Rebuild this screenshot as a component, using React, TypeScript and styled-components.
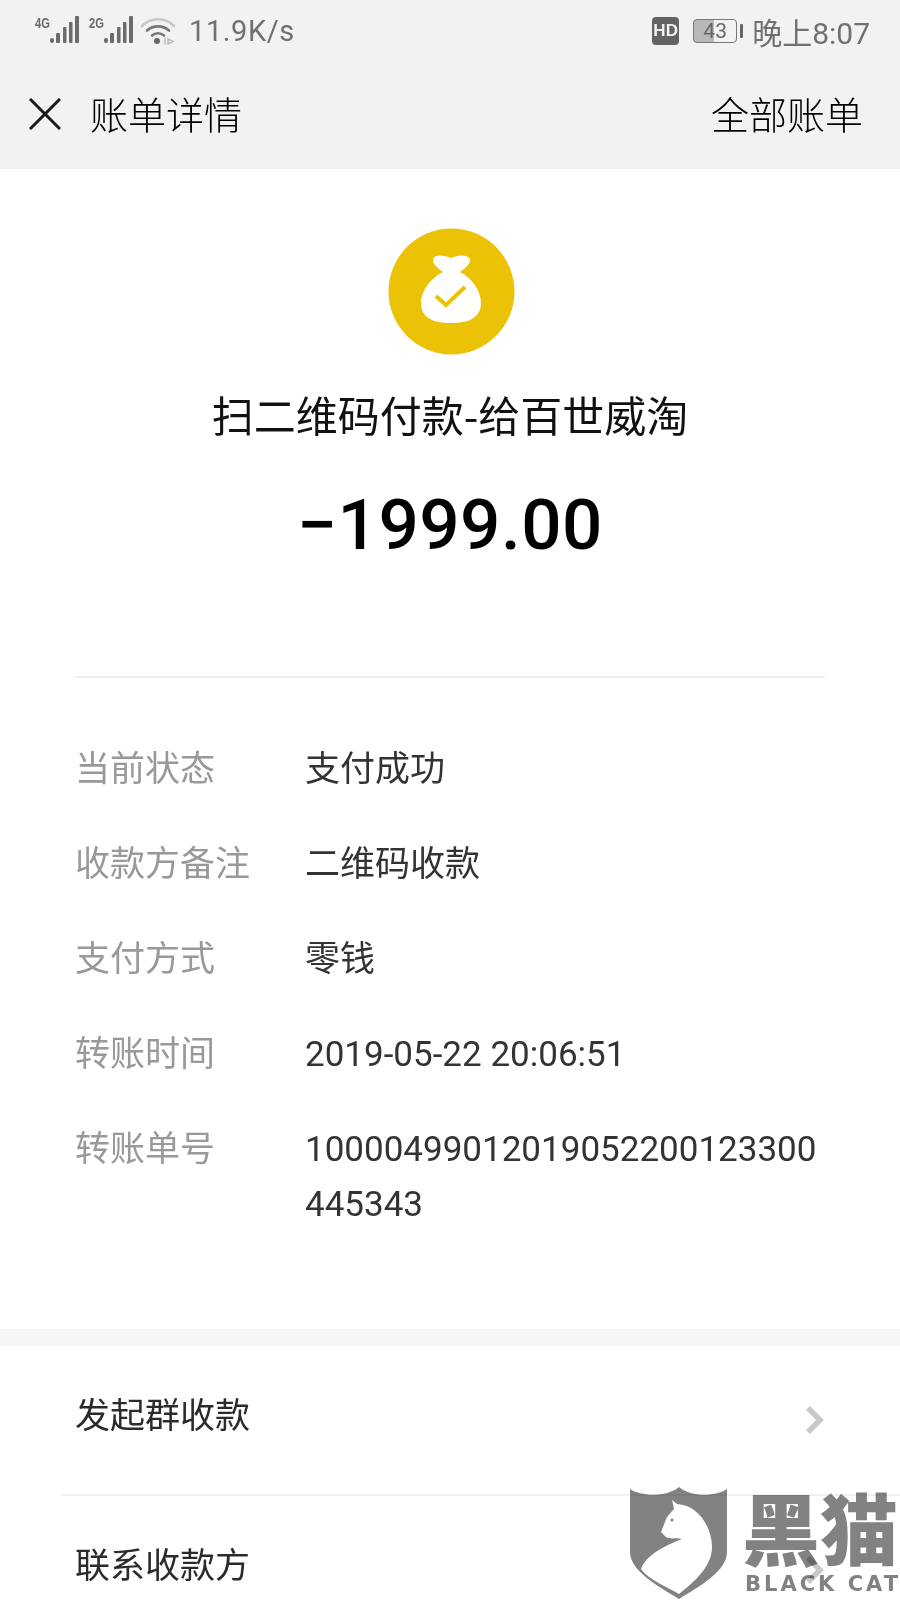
import React from 'react';
import styled, { createGlobalStyle } from 'styled-components';

const Global = createGlobalStyle`
  html, body { margin: 0; padding: 0; background: #fff; }
  body { font-family: Roboto, "Noto Sans CJK SC", sans-serif; }
`;

const Page = styled.div`
  position: relative;
  width: 900px;
  height: 1600px;
  overflow: hidden;
  background: #fff;
`;

const Top = styled.div`
  background: #f2f2f2;
  height: 169px;
  display: flex;
  flex-direction: column;
`;

const StatusBar = styled.div`
  height: 62px;
  padding: 0 30px 0 35px;
  display: flex;
  align-items: center;
  justify-content: space-between;
  color: #707070;
`;

const StatusGroup = styled.div`
  display: flex;
  align-items: center;
`;

const SignalGlyph = styled.svg`
  margin-bottom: 2px;
`;

const WifiGlyph = styled.svg`
  margin-left: -3px;
`;

const Speed = styled.span`
  font-size: 29px;
  letter-spacing: 0.6px;
  margin-left: 13px;
`;

const Clock = styled.span`
  font-family: Roboto, "Noto Sans CJK SC", sans-serif;
  font-size: 30px;
  margin-left: 9px;
`;

const HdBadge = styled.span`
  width: 27px;
  height: 28px;
  border-radius: 4px;
  background: #636363;
  color: #f2f2f2;
  font: 700 17px "Liberation Sans", sans-serif;
  display: flex;
  align-items: center;
  justify-content: center;
  margin-right: 14px;
`;

const Battery = styled.span`
  position: relative;
  width: 44px;
  height: 24px;
  box-sizing: border-box;
  border: 1.5px solid #777;
  border-radius: 4px;
  font-size: 21px;
  display: flex;
  align-items: center;
  justify-content: center;
  color: #666;
  background: linear-gradient(90deg, #b8b8b8 0 48%, transparent 48%);
`;

const BatteryCap = styled.span`
  width: 3px;
  height: 14px;
  margin-left: 3px;
  background: #666;
  border-radius: 1px;
`;

const NavBar = styled.div`
  flex: 1;
  display: flex;
  align-items: center;
  justify-content: space-between;
  padding: 0 37px 7px 29px;
  font-family: "Noto Sans CJK SC", sans-serif;
  font-size: 38px;
  font-weight: 300;
  color: #000;
`;

const NavLeft = styled.div`
  display: flex;
  align-items: center;
  gap: 29px;
`;

const CloseGlyph = styled.svg`
  margin-top: 4px;
`;

const Summary = styled.div`
  display: flex;
  flex-direction: column;
  align-items: center;
  padding: 59px 0 0 2px;
`;

const Title = styled.div`
  margin: 28px 2px 0 0;
  font-family: "Noto Sans CJK SC", sans-serif;
  font-size: 42px;
  line-height: 62px;
  font-weight: 400;
  color: #111;
`;

const Amount = styled.div`
  margin: 36px 2px 0 0;
  font-family: Roboto, sans-serif;
  font-size: 71px;
  line-height: 88px;
  font-weight: 500;
  color: #000;
  letter-spacing: 0.5px;
`;

const Divider = styled.div`
  height: 2px;
  background: #eeeeee;
  margin: 107px 75px 0;
`;

const Details = styled.div`
  padding: 60px 75px 0;
  display: flex;
  flex-direction: column;
  gap: 40px;
`;

const Row = styled.div`
  display: flex;
  font-size: 35px;
  line-height: 55px;
`;

const Label = styled.div`
  width: 230px;
  flex-shrink: 0;
  font-family: "Noto Sans CJK SC", sans-serif;
  font-weight: 400;
  color: #999;
`;

const Value = styled.div<{ $latin?: boolean }>`
  flex: 1;
  font-family: ${p => (p.$latin ? 'Roboto, ' : '')}"Noto Sans CJK SC", sans-serif;
  font-weight: 400;
  color: #333;
  word-break: break-all;
  padding-top: ${p => (p.$latin ? '4px' : '0')};
  margin-bottom: ${p => (p.$latin ? '-4px' : '0')};
`;

const Gap = styled.div`
  height: 17px;
  margin-top: 101px;
  background: #f6f6f6;
`;

const ActionRow = styled.div`
  height: 148px;
  margin-left: 62px;
  padding: 0 76px 0 13px;
  display: flex;
  align-items: center;
  justify-content: space-between;
  font-family: "Noto Sans CJK SC", sans-serif;
  font-size: 35px;
  font-weight: 400;
  color: #2b2b2b;
`;

const ActionText = styled.span`
  margin-bottom: 16px;
`;

const ActionLine = styled.div`
  height: 2px;
  background: #f0f0f0;
  margin-left: 62px;
`;

const Watermark = styled.div`
  position: absolute;
  left: 630px;
  top: 1487px;
  display: flex;
  gap: 15px;
  color: #828282;
  mix-blend-mode: multiply;
`;

const MarkText = styled.div`
  display: flex;
  flex-direction: column;
  padding-top: 2px;
`;

const MarkCn = styled.div`
  font-family: "Noto Sans CJK SC", sans-serif;
  font-size: 78px;
  line-height: 74px;
  font-weight: 900;
`;

const MarkEn = styled.div`
  margin: 6px 0 0 3px;
  font-family: "DejaVu Sans", sans-serif;
  font-size: 21px;
  font-weight: 700;
  line-height: 30px;
  letter-spacing: 3px;
  white-space: nowrap;
`;

const Signal = ({ tag }: { tag: string }) => (
  <SignalGlyph width="54" height="28" viewBox="0 0 54 28">
    <text x="0" y="12" fontFamily="Liberation Sans, sans-serif" fontSize="14" fontWeight="700" fill="#6b6b6b" textLength="15" lengthAdjust="spacingAndGlyphs">{tag}</text>
    <g fill="#6b6b6b">
      <rect x="15" y="22" width="4" height="5" rx="2" />
      <rect x="21" y="17" width="4" height="10" rx="1" />
      <rect x="28" y="11" width="3.5" height="16" rx="1" />
      <rect x="34" y="6" width="3.5" height="21" rx="1" />
      <rect x="40" y="0" width="4" height="27" rx="1" />
    </g>
  </SignalGlyph>
);

const Wifi = () => (
  <WifiGlyph width="36" height="30" viewBox="0 0 36 30" fill="none" strokeLinecap="round">
    <path d="M2 10 C11 1 25 1 34 10" stroke="#c8c8c8" strokeWidth="2.6" />
    <path d="M7 14.5 C13 9 23 9 29 14.5" stroke="#777" strokeWidth="2.6" />
    <path d="M12 19.5 C15.5 16.5 20.5 16.5 24 19.5" stroke="#777" strokeWidth="2.6" />
    <circle cx="17" cy="25" r="3" fill="#666" />
    <path d="M25 22 L25 28 M28 23 L33 25.5 L28 28 Z" stroke="#bbb" strokeWidth="1.5" />
  </WifiGlyph>
);

const CloseIcon = () => (
  <CloseGlyph width="32" height="32" viewBox="0 0 32 32" stroke="#1a1a1a" strokeWidth="3">
    <path d="M1 1 L31 31 M31 1 L1 31" />
  </CloseGlyph>
);

const BagIcon = () => (
  <svg width="127" height="127" viewBox="0 0 127 127">
    <circle cx="63.5" cy="63.5" r="63" fill="#ecc207" />
    <path
      d="M45 31 C47 26 56 27 63 30 C70 27 79 26 82 31 C83 36 76 41 72 44 C84 50 93 63 93 75 C93 90 80 95 63 95 C46 95 33 90 33 75 C33 63 43 50 55 44 C51 41 44 36 45 31 Z"
      fill="#fff"
    />
    <path d="M48 68 L58 77 L77 59" fill="none" stroke="#ecc207" strokeWidth="4" />
  </svg>
);

const Chevron = () => (
  <svg width="18" height="28" viewBox="0 0 18 28" fill="none" stroke="#c8c8c8" strokeWidth="5.5">
    <path d="M2 2 L14 14 L2 26" />
  </svg>
);

const Shield = () => (
  <svg width="97" height="112" viewBox="0 0 97 112">
    <path
      d="M0 2 C10 9 36 11 49 0 C62 11 87 9 97 2 L97 65 C97 84 70 99 49 112 C28 99 0 84 0 65 Z"
      fill="#828282"
    />
    <path
      d="M42 13 L47 17 C68 18 82 40 82 60 C82 80 64 95 49 107 C37 100 18 92 11 82 C15 72 24 63 52 52 C46 50 41 53 36 50 L31 45 L37 30 L44 22 Z"
      fill="#fff"
    />
    <circle cx="42" cy="33" r="1.5" fill="#828282" />
  </svg>
);

export default function App() {
  return (
    <Page>
      <Global />
      <Top>
        <StatusBar>
          <StatusGroup>
            <Signal tag="4G" />
            <Signal tag="2G" />
            <Wifi />
            <Speed>11.9K/s</Speed>
          </StatusGroup>
          <StatusGroup>
            <HdBadge>HD</HdBadge>
            <Battery>43</Battery>
            <BatteryCap />
            <Clock>晚上8:07</Clock>
          </StatusGroup>
        </StatusBar>
        <NavBar>
          <NavLeft>
            <CloseIcon />
            <span>账单详情</span>
          </NavLeft>
          <span>全部账单</span>
        </NavBar>
      </Top>

      <Summary>
        <BagIcon />
        <Title>扫二维码付款-给百世威淘</Title>
        <Amount>−1999.00</Amount>
      </Summary>
      <Divider />

      <Details>
        <Row><Label>当前状态</Label><Value>支付成功</Value></Row>
        <Row><Label>收款方备注</Label><Value>二维码收款</Value></Row>
        <Row><Label>支付方式</Label><Value>零钱</Value></Row>
        <Row><Label>转账时间</Label><Value $latin>2019-05-22 20:06:51</Value></Row>
        <Row><Label>转账单号</Label><Value $latin>10000499012019052200123300445343</Value></Row>
      </Details>

      <Gap />
      <ActionRow>
        <ActionText>发起群收款</ActionText>
        <Chevron />
      </ActionRow>
      <ActionLine />
      <ActionRow>
        <ActionText>联系收款方</ActionText>
        <Chevron />
      </ActionRow>

      <Watermark>
        <Shield />
        <MarkText>
          <MarkCn>黑猫</MarkCn>
          <MarkEn>BLACK CAT</MarkEn>
        </MarkText>
      </Watermark>
    </Page>
  );
}
